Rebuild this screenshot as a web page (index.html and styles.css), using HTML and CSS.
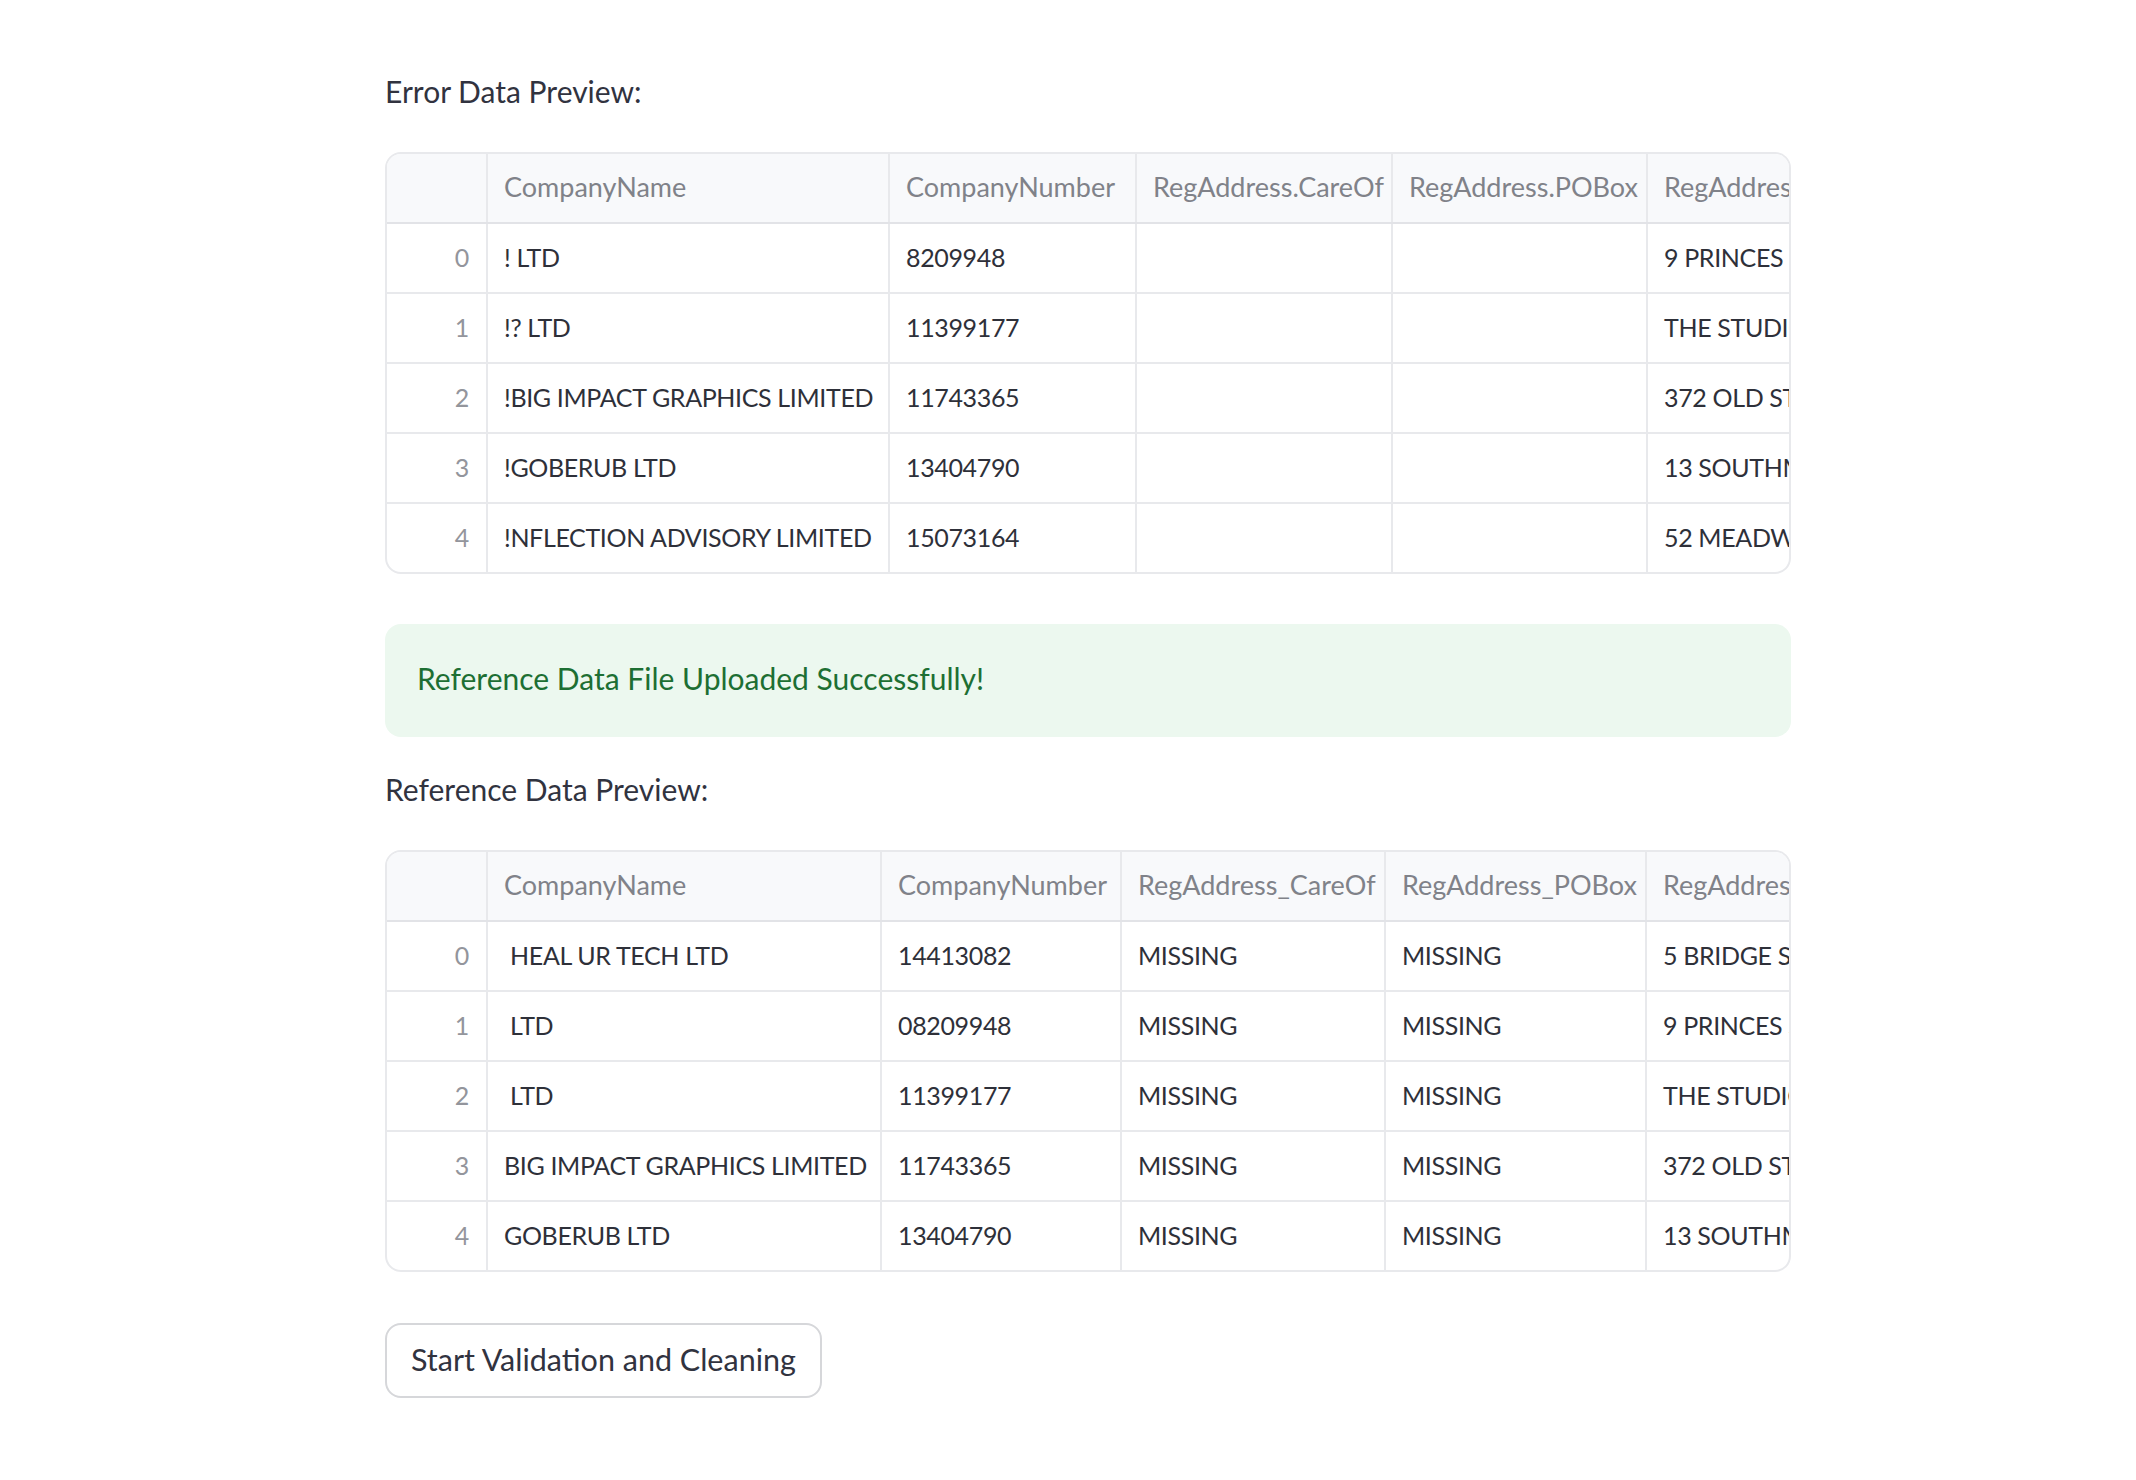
FILE: index.html
```html
<!DOCTYPE html>
<html>
<head>
<meta charset="utf-8">
<link rel="stylesheet" href="styles.css">
</head>
<body>
<main class="page">
  <p class="label label-first">Error Data Preview:</p>
  <div class="grid grid-error">
    <div class="row head">
      <div class="cell idx"></div>
      <div class="cell c1">CompanyName</div>
      <div class="cell c2">CompanyNumber</div>
      <div class="cell c3">RegAddress.CareOf</div>
      <div class="cell c4">RegAddress.POBox</div>
      <div class="cell c5">RegAddress.AddressLine1</div>
    </div>
    <div class="row">
      <div class="cell idx">0</div>
      <div class="cell c1">! LTD</div>
      <div class="cell c2">8209948</div>
      <div class="cell c3"></div>
      <div class="cell c4"></div>
      <div class="cell c5">9 PRINCES STREET</div>
    </div>
    <div class="row">
      <div class="cell idx">1</div>
      <div class="cell c1">!? LTD</div>
      <div class="cell c2">11399177</div>
      <div class="cell c3"></div>
      <div class="cell c4"></div>
      <div class="cell c5">THE STUDIO</div>
    </div>
    <div class="row">
      <div class="cell idx">2</div>
      <div class="cell c1">!BIG IMPACT GRAPHICS LIMITED</div>
      <div class="cell c2">11743365</div>
      <div class="cell c3"></div>
      <div class="cell c4"></div>
      <div class="cell c5">372 OLD STREET</div>
    </div>
    <div class="row">
      <div class="cell idx">3</div>
      <div class="cell c1">!GOBERUB LTD</div>
      <div class="cell c2">13404790</div>
      <div class="cell c3"></div>
      <div class="cell c4"></div>
      <div class="cell c5">13 SOUTHMOOR ROAD</div>
    </div>
    <div class="row last">
      <div class="cell idx">4</div>
      <div class="cell c1">!NFLECTION ADVISORY LIMITED</div>
      <div class="cell c2">15073164</div>
      <div class="cell c3"></div>
      <div class="cell c4"></div>
      <div class="cell c5">52 MEADWAY</div>
    </div>
  </div>

  <div class="alert">Reference Data File Uploaded Successfully!</div>

  <p class="label label-second">Reference Data Preview:</p>
  <div class="grid grid-ref">
    <div class="row head">
      <div class="cell idx"></div>
      <div class="cell c1">CompanyName</div>
      <div class="cell c2">CompanyNumber</div>
      <div class="cell c3">RegAddress_CareOf</div>
      <div class="cell c4">RegAddress_POBox</div>
      <div class="cell c5">RegAddress_AddressLine1</div>
    </div>
    <div class="row">
      <div class="cell idx">0</div>
      <div class="cell c1"> HEAL UR TECH LTD</div>
      <div class="cell c2">14413082</div>
      <div class="cell c3">MISSING</div>
      <div class="cell c4">MISSING</div>
      <div class="cell c5">5 BRIDGE STREET</div>
    </div>
    <div class="row">
      <div class="cell idx">1</div>
      <div class="cell c1"> LTD</div>
      <div class="cell c2">08209948</div>
      <div class="cell c3">MISSING</div>
      <div class="cell c4">MISSING</div>
      <div class="cell c5">9 PRINCES STREET</div>
    </div>
    <div class="row">
      <div class="cell idx">2</div>
      <div class="cell c1"> LTD</div>
      <div class="cell c2">11399177</div>
      <div class="cell c3">MISSING</div>
      <div class="cell c4">MISSING</div>
      <div class="cell c5">THE STUDIO</div>
    </div>
    <div class="row">
      <div class="cell idx">3</div>
      <div class="cell c1">BIG IMPACT GRAPHICS LIMITED</div>
      <div class="cell c2">11743365</div>
      <div class="cell c3">MISSING</div>
      <div class="cell c4">MISSING</div>
      <div class="cell c5">372 OLD STREET</div>
    </div>
    <div class="row last">
      <div class="cell idx">4</div>
      <div class="cell c1">GOBERUB LTD</div>
      <div class="cell c2">13404790</div>
      <div class="cell c3">MISSING</div>
      <div class="cell c4">MISSING</div>
      <div class="cell c5">13 SOUTHMOOR ROAD</div>
    </div>
  </div>

  <button class="btn" type="button">Start Validation and Cleaning</button>
</main>
</body>
</html>
```
FILE: styles.css
```css
html, body {
  margin: 0;
  padding: 0;
  background: #ffffff;
}

body {
  font-family: Lato, "Noto Sans", "Liberation Sans", sans-serif;
  color: #31333f;
}

.page {
  width: 1406px;
  margin-left: 385px;
  padding-top: 66px;
  display: flex;
  flex-direction: column;
  align-items: flex-start;
}

.label {
  margin: 0;
  font-size: 30px;
  line-height: 51px;
  color: #31333f;
}

.label-second {
  margin-top: 27px;
}

.grid {
  margin-top: 35px;
  width: 1402px;
  border: 2px solid #e8e9ec;
  border-radius: 16px;
  overflow: hidden;
  display: flex;
  flex-direction: column;
  font-size: 25px;
  letter-spacing: -0.35px;
}

.row {
  display: flex;
  height: 70px;
  box-sizing: border-box;
  border-bottom: 2px solid #e8e9ec;
}

.row.last {
  height: 68px;
  border-bottom: none;
}

.row.head {
  background: #f8f9fb;
  border-bottom-color: #e2e3e7;
}

.cell {
  flex: none;
  box-sizing: border-box;
  border-right: 2px solid #e8e9ec;
  padding: 0 16px 3px 16px;
  display: flex;
  align-items: center;
  white-space: pre;
  overflow: hidden;
  color: #2e3039;
}

.head .cell {
  color: #808289;
  font-size: 27px;
  letter-spacing: 0;
}

.cell.idx {
  width: 101px;
  justify-content: flex-end;
  padding-right: 17px;
  color: #93959c;
}

.cell.c5 {
  flex: 1 0 auto;
  border-right: none;
}

.grid-error .c1 { width: 402px; }
.grid-error .c2 { width: 247px; }
.grid-error .c3 { width: 256px; }
.grid-error .c4 { width: 255px; }

.grid-ref .c1 { width: 394px; }
.grid-ref .c2 { width: 240px; }
.grid-ref .c3 { width: 264px; }
.grid-ref .c4 { width: 261px; }

.alert {
  margin-top: 50px;
  width: 1406px;
  box-sizing: border-box;
  padding: 29px 32px 33px 32px;
  border-radius: 16px;
  background: #ecf8ef;
  color: #1d6f33;
  font-size: 30px;
  line-height: 51px;
}

.btn {
  margin-top: 51px;
  height: 75px;
  padding: 0 24px 2px 24px;
  border: 2px solid #d6d7da;
  border-radius: 16px;
  background: #ffffff;
  color: #31333f;
  font-family: inherit;
  font-size: 30.5px;
  line-height: 51px;
  cursor: pointer;
}
```
